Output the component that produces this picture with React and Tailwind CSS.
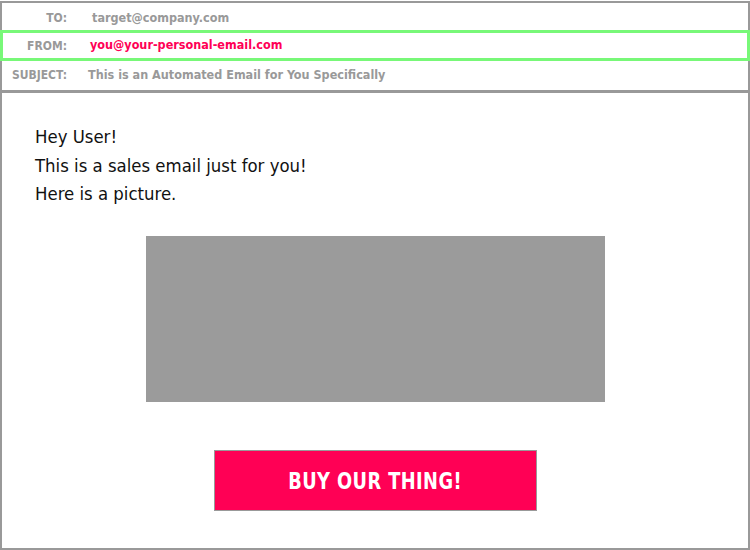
const font = { fontFamily: '"DejaVu Sans Condensed", "DejaVu Sans", sans-serif' };

function HeaderRow({ label, children, highlight }) {
    return (
        <div
            className={
                highlight
                    ? 'relative -mx-[2px] flex h-[31px] items-center border-[3px] border-[#78f878] pl-[2px]'
                    : 'flex h-[27px] items-center pt-[3px]'
            }
        >
            <div className={`w-[65px] shrink-0 text-right text-[12px] font-bold text-[#999] ${highlight ? '-ml-[3px]' : ''}`}>
                {label}
            </div>
            {children}
        </div>
    );
}

export default function App() {
    return (
        <div className="h-[550px] w-[750px] bg-white pt-px" style={font}>
            <div className="flex h-[549px] flex-col border-2 border-[#999]">
                <HeaderRow label="TO:">
                    <span className="pl-[25px] text-[12.5px] font-bold text-[#999]">target@company.com</span>
                </HeaderRow>
                <HeaderRow label="FROM:" highlight>
                    <span className="pl-[23px] text-[12.5px] font-bold text-[#ff0055]">you@your-personal-email.com</span>
                </HeaderRow>
                <div className="flex h-[32px] items-center border-b-[3px] border-[#999] pb-px">
                    <div className="w-[65px] shrink-0 text-right text-[12px] font-bold text-[#999]">SUBJECT:</div>
                    <span className="pl-[21px] text-[12.5px] font-bold text-[#999]">This is an Automated Email for You Specifically</span>
                </div>

                <div className="flex flex-1 flex-col">
                    <div className="pl-[33px] pt-[30px] text-[18.4px] leading-[28.5px] text-[#111]">
                        <p>Hey User!</p>
                        <p>This is a sales email just for you!</p>
                        <p>Here is a picture.</p>
                    </div>
                    <div className="mx-auto mt-[27px] h-[166px] w-[459px] bg-[#9b9b9b]" />
                    <button className="mx-auto mt-[48px] flex h-[61px] w-[323px] items-center justify-center border border-[#999] bg-[#ff0055] text-white">
                        <span className="inline-block origin-center scale-x-[0.86] pt-[2px] text-[23px] font-bold tracking-[0.5px]">
                            BUY OUR THING!
                        </span>
                    </button>
                </div>
            </div>
        </div>
    );
}
